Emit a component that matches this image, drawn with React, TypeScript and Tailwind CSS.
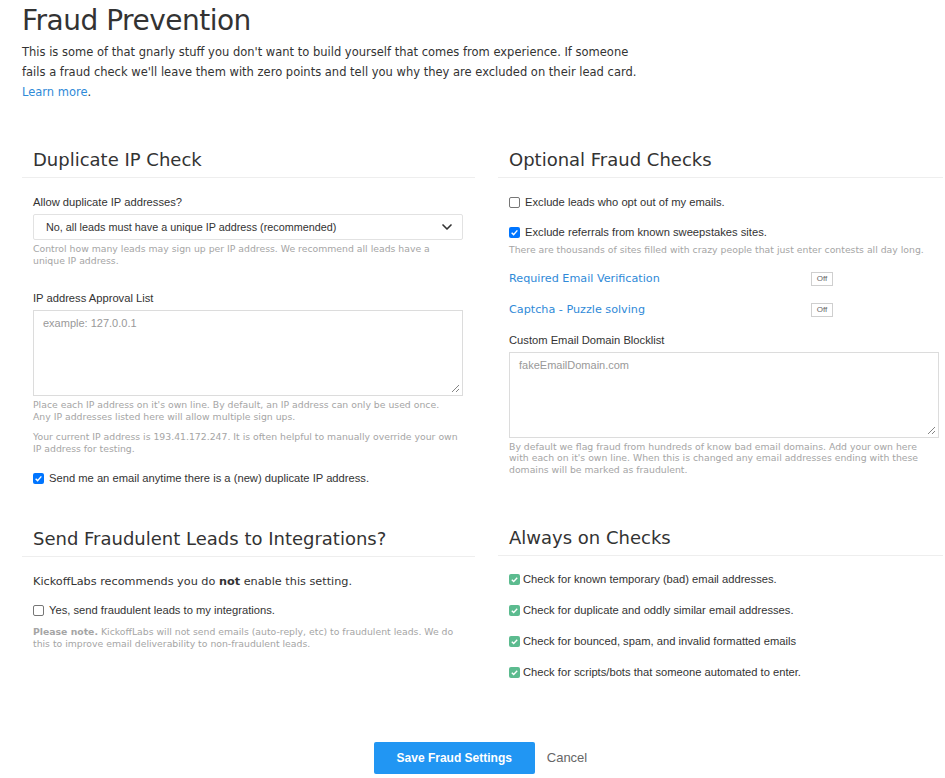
import { ChevronDown } from "lucide-react";

const verdana = "font-['DejaVu_Sans',Verdana,sans-serif]";
const arial = "font-['Liberation_Sans',Arial,sans-serif]";

function Box({ checked }: { checked?: boolean }) {
  if (checked) {
    return (
      <span className="flex h-[11px] w-[11px] shrink-0 items-center justify-center rounded-[2px] bg-[#0075ff]">
        <svg viewBox="0 0 12 12" className="h-[9px] w-[9px]" fill="none">
          <path d="M2.2 6.3 4.8 8.8 9.8 3.2" stroke="white" strokeWidth="1.9" />
        </svg>
      </span>
    );
  }
  return (
    <span className="h-[11px] w-[11px] shrink-0 rounded-[2px] border border-[#767676] bg-white" />
  );
}

function GreenCheck() {
  return (
    <span className="flex h-[11px] w-[11px] shrink-0 items-center justify-center rounded-[2px] bg-[#5cbb8f]">
      <svg viewBox="0 0 12 12" className="h-[9px] w-[9px]" fill="none">
        <path d="M2.4 6.2 4.9 8.6 9.6 3.6" stroke="white" strokeWidth="1.8" />
      </svg>
    </span>
  );
}

function CheckRow({
  checked,
  children,
  className = "",
}: {
  checked?: boolean;
  children: React.ReactNode;
  className?: string;
}) {
  return (
    <label className={`flex items-center gap-[5px] text-[11.2px] leading-[16px] text-[#333] ${arial} ${className}`}>
      <Box checked={checked} />
      <span>{children}</span>
    </label>
  );
}

function SectionTitle({ children }: { children: React.ReactNode }) {
  return (
    <div className="border-b border-[#eeeeee] pb-[5px]">
      <h2 className={`px-[11px] text-[18px] leading-[24px] text-[#333] ${verdana}`}>{children}</h2>
    </div>
  );
}

function Help({ children, className = "" }: { children: React.ReactNode; className?: string }) {
  return (
    <p className={`text-[9.3px] leading-[11.5px] text-[#a5a5a5] ${verdana} ${className}`}>{children}</p>
  );
}

function Toggle() {
  return (
    <span className={`flex h-[14px] w-[22px] items-center justify-center border border-[#cfcfcf] text-[8px] text-[#666] ${arial}`}>
      Off
    </span>
  );
}

function Resizer() {
  return (
    <svg viewBox="0 0 10 10" className="absolute bottom-[2px] right-[2px] h-[10px] w-[10px]" fill="none">
      <path d="M9 2 2 9M9 6 6 9" stroke="#777" strokeWidth="0.9" />
    </svg>
  );
}

export default function App() {
  return (
    <div className="min-h-[778px] bg-white px-[22px] pt-[3px]">
      <h1 className={`text-[28px] leading-[36px] text-[#333] ${verdana} tracking-[-0.5px]`}>
        Fraud Prevention
      </h1>
      <p className={`mt-[3px] text-[11.5px] leading-[20px] text-[#333] ${verdana}`}>
        This is some of that gnarly stuff you don't want to build yourself that comes from experience. If someone
        <br />
        fails a fraud check we'll leave them with zero points and tell you why they are excluded on their lead card.
        <br />
        <a href="#" className="text-[#2f8ad8]">Learn more</a>.
      </p>

      <div className="mt-[46px] grid grid-cols-[453px_445px] gap-x-[23px]">
        <section>
          <SectionTitle>Duplicate IP Check</SectionTitle>
          <div className="px-[11px]">
            <div className={`mt-[16px] text-[11.2px] leading-[16px] text-[#333] ${arial}`}>Allow duplicate IP addresses?</div>
            <div className={`mt-[4px] flex h-[26px] w-[430px] items-center justify-between rounded-[2px] border border-[#e2e2e2] pl-[12px] pr-[7px] text-[10.8px] text-[#333] ${arial}`}>
              <span>No, all leads must have a unique IP address (recommended)</span>
              <ChevronDown size={16} strokeWidth={2.5} className="text-[#333]" />
            </div>
            <Help className="mt-[3px] w-[420px] leading-[12px]">
              Control how many leads may sign up per IP address. We recommend all leads have a unique IP address.
            </Help>

            <div className={`mt-[23px] text-[11.2px] leading-[16px] text-[#333] ${arial}`}>IP address Approval List</div>
            <div className={`relative mt-[4px] h-[86px] w-[430px] border border-[#dcdcdc] px-[9px] py-[4px] text-[11px] text-[#999] ${arial}`}>
              example: 127.0.0.1
              <Resizer />
            </div>
            <Help className="mt-[3px] w-[425px]">
              Place each IP address on it's own line. By default, an IP address can only be used once. Any IP
              addresses listed here will allow multiple sign ups.
            </Help>
            <Help className="mt-[9px] w-[425px] leading-[12px]">
              Your current IP address is 193.41.172.247. It is often helpful to manually override your own IP
              address for testing.
            </Help>
            <CheckRow checked className="mt-[15px]">
              Send me an email anytime there is a (new) duplicate IP address.
            </CheckRow>
          </div>
        </section>

        <section>
          <SectionTitle>Optional Fraud Checks</SectionTitle>
          <div className="px-[11px]">
            <CheckRow className="mt-[16px]">Exclude leads who opt out of my emails.</CheckRow>
            <CheckRow checked className="mt-[14px]">Exclude referrals from known sweepstakes sites.</CheckRow>
            <Help className="mt-[4px]">
              There are thousands of sites filled with crazy people that just enter contests all day long.
            </Help>
            <div className="mt-[15px] flex w-[324px] items-center justify-between">
              <a href="#" className={`text-[11.2px] leading-[16px] text-[#2f8ad8] ${verdana}`}>Required Email Verification</a>
              <Toggle />
            </div>
            <div className="mt-[15px] flex w-[324px] items-center justify-between">
              <a href="#" className={`text-[11.2px] leading-[16px] text-[#2f8ad8] ${verdana}`}>Captcha - Puzzle solving</a>
              <Toggle />
            </div>
            <div className={`mt-[14px] text-[11.2px] leading-[16px] text-[#333] ${arial}`}>Custom Email Domain Blocklist</div>
            <div className={`relative mt-[4px] h-[86px] w-[430px] border border-[#dcdcdc] px-[9px] py-[4px] text-[11px] text-[#999] ${arial}`}>
              fakeEmailDomain.com
              <Resizer />
            </div>
            <Help className="mt-[3px] w-[425px]">
              By default we flag fraud from hundreds of know bad email domains. Add your own here with each on it's
              own line. When this is changed any email addresses ending with these domains will be marked as
              fraudulent.
            </Help>
          </div>
        </section>
      </div>

      <div className="mt-[41px] grid grid-cols-[453px_445px] gap-x-[23px]">
        <section>
          <SectionTitle>Send Fraudulent Leads to Integrations?</SectionTitle>
          <div className="px-[11px]">
            <p className={`mt-[17px] text-[11.25px] leading-[16px] text-[#333] ${verdana}`}>
              KickoffLabs recommends you do <b>not</b> enable this setting.
            </p>
            <CheckRow className="mt-[12px]">Yes, send fraudulent leads to my integrations.</CheckRow>
            <div className={`mt-[8px] text-[9.3px] leading-[11.5px] text-[#a5a5a5] ${verdana}`}>
              <div className="flex gap-[3px]">
                <span className="font-bold">Please note.</span>
                <span>KickoffLabs will not send emails (auto-reply, etc) to fraudulent leads. We do</span>
              </div>
              <div>this to improve email deliverability to non-fraudulent leads.</div>
            </div>
          </div>
        </section>

        <section className="-mt-px">
          <SectionTitle>Always on Checks</SectionTitle>
          <div className="flex flex-col gap-[15px] px-[11px] pt-[15px]">
            {[
              "Check for known temporary (bad) email addresses.",
              "Check for duplicate and oddly similar email addresses.",
              "Check for bounced, spam, and invalid formatted emails",
              "Check for scripts/bots that someone automated to enter.",
            ].map((item) => (
              <div key={item} className={`flex items-center gap-[3px] text-[11.2px] leading-[16px] text-[#333] ${arial}`}>
                <GreenCheck />
                <span>{item}</span>
              </div>
            ))}
          </div>
        </section>
      </div>

      <div className="mt-[62px] flex items-center justify-center pb-[5px] pl-[16px]">
        <button
          type="button"
          className={`h-[32px] w-[161px] rounded-[2px] bg-[#2196f3] text-[12px] font-bold text-white ${arial}`}
        >
          Save Fraud Settings
        </button>
        <span className={`ml-[12px] text-[13px] text-[#666] ${arial}`}>Cancel</span>
      </div>
    </div>
  );
}
